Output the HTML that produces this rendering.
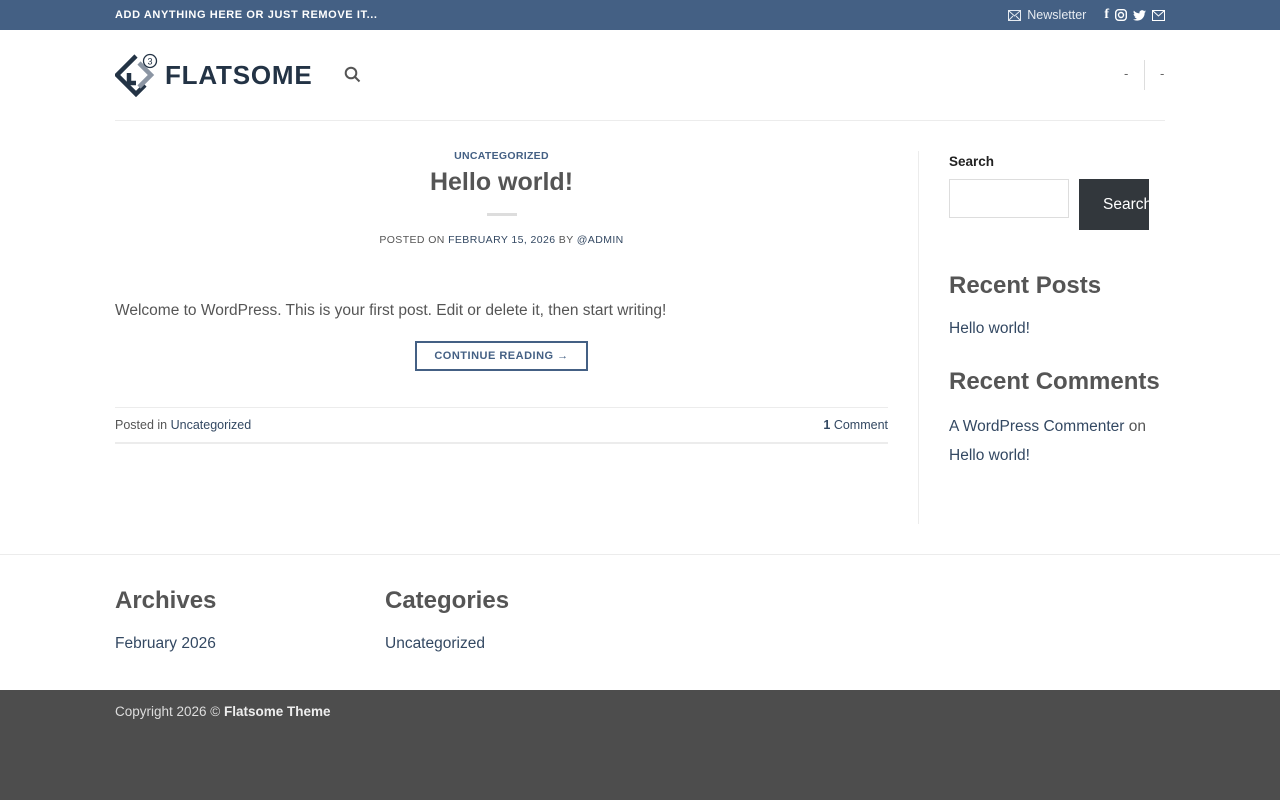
<!DOCTYPE html>
<html><head><meta charset="utf-8"><style>
*{box-sizing:border-box;margin:0;padding:0}
body{width:1280px;height:800px;overflow:hidden;font-family:"Liberation Sans",sans-serif;background:#fff;color:#555;position:relative}
a{color:#334862;text-decoration:none}
.top{height:30px;background:#446084;color:#fff;position:relative}
.top .l{position:absolute;left:115px;top:9px;font-size:11px;font-weight:bold;letter-spacing:.6px}
.top .r{position:absolute;right:115px;top:7px;font-size:12.5px;color:#e6ebf1;display:flex;align-items:center;gap:6px}
.hdr{position:absolute;top:30px;left:115px;width:1050px;height:91px;border-bottom:1px solid #ececec}
.abs{position:absolute}
.cat{font-size:10.5px;font-weight:bold;color:#446084;letter-spacing:.3px}
h1{font-size:25px;color:#555;font-weight:bold}
h3{font-size:24px;color:#555;font-weight:bold}
.lnk{font-size:15.5px;color:#334862}
.foot{position:absolute;top:690px;left:0;width:1280px;height:110px;background:#4d4d4d}
</style></head><body>
<div class="top"><div class="l">ADD ANYTHING HERE OR JUST REMOVE IT...</div>
<div class="r"><svg width="13" height="11" viewBox="0 0 13 11"><rect x=".5" y=".5" width="12" height="10" fill="none" stroke="#e6ebf1"/><path d="M1 1l5.5 5 5.5-5M1 10l4-4M12 10l-4-4" stroke="#e6ebf1" fill="none"/></svg><span>Newsletter</span><span style="width:6px"></span>
<b style="font-family:'Liberation Serif';font-size:14px;color:#fff">f</b>
<svg width="12" height="12"><rect x=".7" y=".7" width="10.6" height="10.6" rx="3" fill="none" stroke="#fff" stroke-width="1.4"/><circle cx="6" cy="6" r="2.5" fill="none" stroke="#fff" stroke-width="1.4"/></svg>
<svg width="13" height="11" viewBox="0 0 24 20"><path d="M24 2.4c-.9.4-1.8.7-2.8.8 1-.6 1.8-1.6 2.2-2.7-1 .6-2 1-3.1 1.2A4.9 4.9 0 0 0 11.9 6 14 14 0 0 1 1.7.9a4.9 4.9 0 0 0 1.5 6.6c-.8 0-1.6-.3-2.200-.6 0 2.4 1.7 4.4 3.900 4.800-.7.2-1.500.2-2.200.1.6 2 2.400 3.400 4.600 3.400A9.900 9.900 0 0 1 0 17.300 14 14 0 0 0 7.500 19.500c9.100 0 14-7.500 14-14v-.6c1-.7 1.800-1.600 2.500-2.500z" fill="#fff"/></svg>
<svg width="13" height="11" viewBox="0 0 13 11"><rect x=".5" y=".5" width="12" height="10" fill="none" stroke="#fff"/><path d="M1 1l5.5 5 5.5-5" stroke="#fff" fill="none"/></svg></div></div>
<div class="hdr">
<svg class="abs" style="left:0;top:23px" width="44" height="44" viewBox="0 0 44 44"><path d="M21 3 L2 22 L21 41 L30 32" fill="none" stroke="#233345" stroke-width="4.5"/><path d="M14 20 L14 30 L21 30" fill="none" stroke="#233345" stroke-width="4.5"/><path d="M24 10 L36 22 L24 34" fill="none" stroke="#8b95a3" stroke-width="4.5"/><circle cx="35" cy="8" r="6.5" fill="#fff" stroke="#233345" stroke-width="1.3"/><text x="35" y="11.5" font-size="9" text-anchor="middle" fill="#233345" font-family="Liberation Sans">3</text></svg>
<div class="abs" style="left:50px;top:30px;font-size:26px;font-weight:bold;color:#233345;letter-spacing:.8px">FLATSOME</div>
<svg class="abs" style="left:229px;top:36px" width="17" height="17"><circle cx="7" cy="7" r="5.3" fill="none" stroke="#555" stroke-width="2"/><path d="M11 11l4.5 4.5" stroke="#555" stroke-width="2"/></svg>
<div class="abs" style="left:1009px;top:36px;font-size:13px;color:#666">-</div>
<div class="abs" style="left:1029px;top:30px;width:1px;height:30px;background:#ddd"></div>
<div class="abs" style="left:1045px;top:36px;font-size:13px;color:#666">-</div>
</div>
<div class="abs" style="left:115px;width:773px;top:150px;text-align:center">
<div class="cat">UNCATEGORIZED</div>
<h1 style="margin-top:6px">Hello world!</h1>
<div style="width:30px;height:3px;background:#ddd;margin:16px auto 0"></div>
<div style="font-size:10.5px;margin-top:18px;letter-spacing:.4px;color:#555">POSTED ON <a>FEBRUARY 15, 2026</a> BY <a>@ADMIN</a></div>
</div>
<div class="abs" style="left:115px;top:302px;font-size:15.5px;color:#555">Welcome to WordPress. This is your first post. Edit or delete it, then start writing!</div>
<div class="abs" style="left:415px;top:341px;width:173px;height:30px;border:2px solid #446084;font-size:11px;font-weight:bold;color:#446084;text-align:center;line-height:26px;letter-spacing:.5px">CONTINUE READING →</div>
<div class="abs" style="left:115px;top:407px;width:773px;height:37px;border-top:1px solid #ececec;border-bottom:2px solid #ececec;font-size:12.5px;line-height:35px">Posted in <a>Uncategorized</a><span style="float:right"><a><b>1</b> Comment</a></span></div>
<div class="abs" style="left:918px;top:151px;width:1px;height:373px;background:#ececec"></div>
<div class="abs" style="left:949px;top:154px;font-size:13.5px;font-weight:bold;color:#222">Search</div>
<div class="abs" style="left:949px;top:179px;width:120px;height:39px;border:1px solid #ddd"></div>
<div class="abs" style="left:1079px;top:179px;width:70px;height:51px;background:#32373c;color:#fff;font-size:15.5px;padding:17px 0 0 24px;overflow:hidden;white-space:nowrap">Search</div>
<h3 class="abs" style="left:949px;top:272px">Recent Posts</h3>
<div class="abs lnk" style="left:949px;top:320px">Hello world!</div>
<h3 class="abs" style="left:949px;top:368px">Recent Comments</h3>
<div class="abs" style="left:949px;top:412px;font-size:15.5px;line-height:29px;color:#555"><a>A WordPress Commenter</a> on<br><a>Hello world!</a></div>
<div class="abs" style="left:0;top:554px;width:1280px;height:1px;background:#ececec"></div>
<h3 class="abs" style="left:115px;top:587px">Archives</h3>
<div class="abs lnk" style="left:115px;top:635px">February 2026</div>
<h3 class="abs" style="left:385px;top:587px">Categories</h3>
<div class="abs lnk" style="left:385px;top:635px">Uncategorized</div>
<div class="foot"><div class="abs" style="left:115px;top:14px;font-size:13.5px;color:#ddd">Copyright 2026 © <b style="color:#eee">Flatsome Theme</b></div></div>
</body></html>
